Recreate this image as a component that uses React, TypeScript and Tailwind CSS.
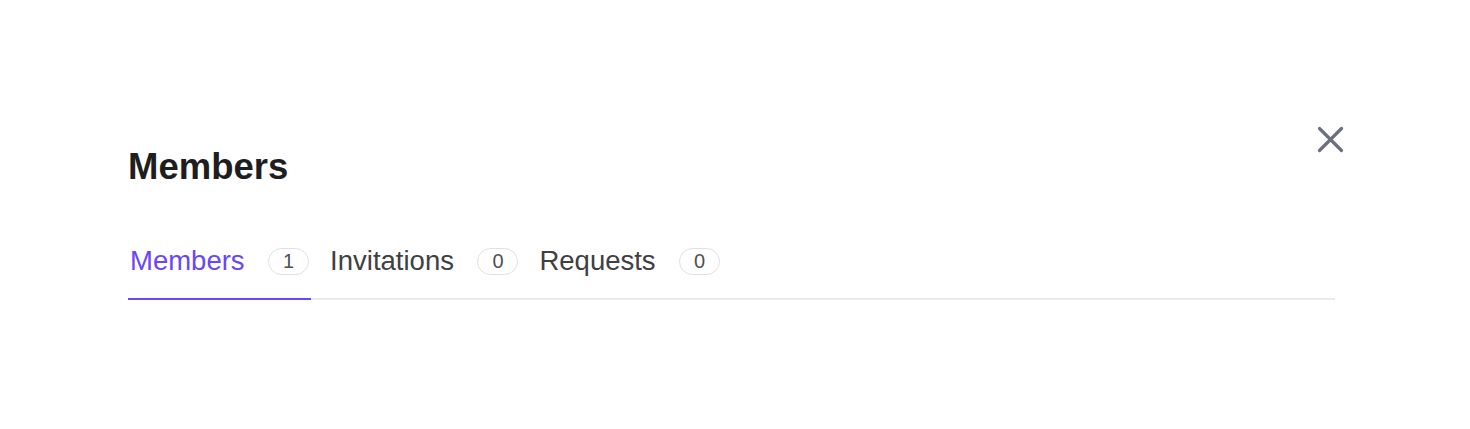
import React from "react";

const tabs = [
  { label: "Members", count: 1, active: true },
  { label: "Invitations", count: 0, active: false },
  { label: "Requests", count: 0, active: false },
];

export default function App() {
  return (
    <div
      className="relative w-[1470px] h-[429px] bg-white"
      style={{ fontFamily: "'Liberation Sans', Arial, sans-serif" }}
    >
      <button
        aria-label="Close"
        className="absolute left-[1316px] top-[125px] w-[29px] h-[29px] flex items-center justify-center"
      >
        <svg width="29" height="29" viewBox="0 0 29 29" fill="none">
          <path
            d="M3.5 3.5L25.5 25.5M25.5 3.5L3.5 25.5"
            stroke="#6b6e7f"
            strokeWidth="3.2"
            strokeLinecap="round"
          />
        </svg>
      </button>
      <div className="pl-[128px] pr-[135px] pt-[147px]">
        <h1 className="text-[36.5px] leading-[40px] font-bold text-[#1e1e20]">
          Members
        </h1>
        <div className="mt-[58px] flex gap-[17px] border-b-2 border-[#ebebeb]">
          {tabs.map((t) => (
            <div
              key={t.label}
              className={
                "flex items-center gap-[23.5px] pl-[2px] pr-[2px] pb-[21px] -mb-[2px] border-b-2 " +
                (t.active ? "border-[#6b46f5]" : "border-transparent")
              }
            >
              <span
                className={
                  "text-[27.5px] leading-[32px] " +
                  (t.active ? "text-[#6b46f5]" : "text-[#404042]")
                }
              >
                {t.label}
              </span>
              <span className="h-[27px] w-[41px] rounded-full border-[1.5px] border-[#e0e0e0] flex items-center justify-center text-[20px] text-[#505052] leading-none">
                {t.count}
              </span>
            </div>
          ))}
        </div>
      </div>
    </div>
  );
}
